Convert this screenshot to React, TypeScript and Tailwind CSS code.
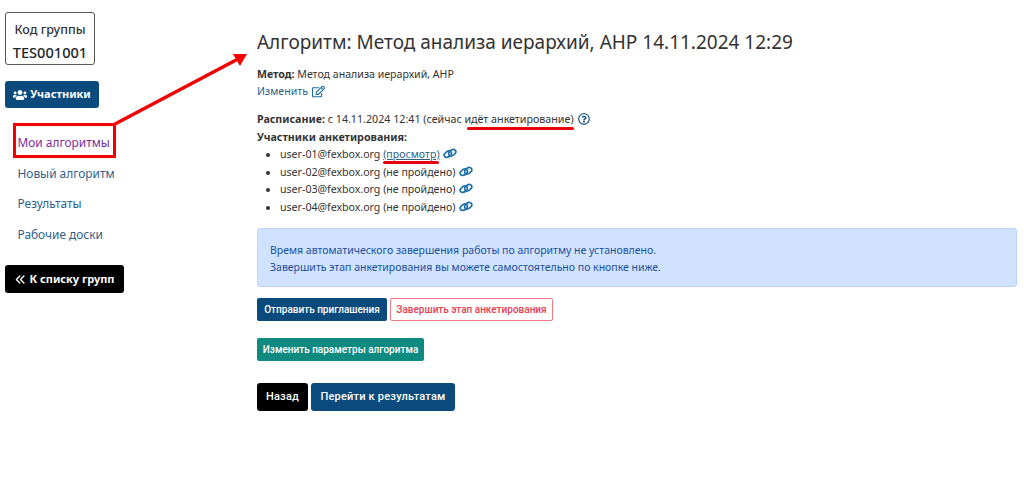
import React from "react";
import { FaUsers, FaRegEdit, FaRegQuestionCircle } from "react-icons/fa";
import { FaAnglesLeft } from "react-icons/fa6";

const sideLinks = ["Новый алгоритм", "Результаты", "Рабочие доски"];
const users = ["user-02@fexbox.org", "user-03@fexbox.org", "user-04@fexbox.org"];

const ChainIcon = () => (
  <svg className="inline-block align-[-1px] ml-[1px]" width="14" height="11" viewBox="0 0 14 11" fill="none" stroke="#1d6fa5" strokeWidth="1.7">
    <ellipse cx="4.8" cy="6.3" rx="3.9" ry="2.7" transform="rotate(-35 4.8 6.3)" />
    <ellipse cx="9.2" cy="4.7" rx="3.9" ry="2.7" transform="rotate(-35 9.2 4.7)" />
  </svg>
);

const App = () => {
  return (
    <div className="relative w-[1024px] h-[488px] overflow-hidden bg-white flex font-['Noto_Sans',sans-serif] text-[#333]">
      <aside className="w-[257px] shrink-0 pl-[5px] pt-3 flex flex-col items-start">
        <div className="w-[90px] h-[53px] border border-[#555] rounded-[3px] flex flex-col items-center pt-[8px]">
          <div className="text-[12.5px] leading-[17px] font-medium">Код группы</div>
          <div className="text-[14.6px] leading-[20px] mt-[4px] font-medium text-[#212529]">TES001001</div>
        </div>
        <button className="mt-[16px] w-[94px] h-[27px] bg-[#0a4a7c] rounded-[3px] text-white text-[11px] font-bold flex items-center justify-center gap-[3px]">
          <FaUsers className="text-[14px]" /> Участники
        </button>
        <nav className="mt-[25px] pl-[12.5px] flex flex-col text-[11.9px] leading-[18px]">
          <a className="text-[#7b2d9e] h-[30.5px]">Мои алгоритмы</a>
          {sideLinks.map((l) => (
            <a key={l} className="text-[#2f5f8a] h-[30.5px]">{l}</a>
          ))}
        </nav>
        <button className="mt-[10px] w-[119px] h-[28px] bg-black rounded-[3px] text-white text-[11px] font-bold flex items-center justify-center gap-1">
          <FaAnglesLeft className="text-[11px]" /> К списку групп
        </button>
      </aside>

      <main className="flex-1 pt-[30px] pr-[7px]">
        <h1 className="text-[19px] leading-[24px] whitespace-nowrap">Алгоритм: Метод анализа иерархий, AHP 14.11.2024 12:29</h1>
        <div className="mt-[13px] text-[10.6px] leading-[14px]"><b>Метод:</b> Метод анализа иерархий, AHP</div>
        <a className="mt-[3px] text-[10.6px] leading-[14px] text-[#2f5f8a] flex items-center gap-1">Изменить <FaRegEdit className="text-[13px] text-[#1d6fa5]" /></a>
        <div className="mt-[14px] text-[10.7px] leading-[14px] flex items-center gap-1">
          <span><b>Расписание:</b> с 14.11.2024 12:41 (сейчас идёт анкетирование)</span>
          <FaRegQuestionCircle className="text-[12px] text-[#0a4a7c]" />
        </div>
        <div className="mt-[4px] text-[10.7px] leading-[14px] font-bold">Участники анкетирования:</div>
        <ul className="mt-[2px] pl-[23px] list-disc text-[10.6px] leading-[17.7px]">
          <li>
            user-01@fexbox.org <a className="text-[#2f5f8a] underline">(просмотр)</a> <ChainIcon />
          </li>
          {users.map((u) => (
            <li key={u}>
              {u} (не пройдено) <ChainIcon />
            </li>
          ))}
        </ul>
        <div className="mt-[11px] h-[59px] bg-[#cfe2ff] border border-[#bcd4f7] rounded-[3px] pl-[12px] pt-[13px] text-[10.5px] leading-[17px] text-[#1b4f9c]">
          <div>Время автоматического завершения работы по алгоритму не установлено.</div>
          <div>Завершить этап анкетирования вы можете самостоятельно по кнопке ниже.</div>
        </div>
        <div className="mt-[11px] flex gap-[3px] font-['Roboto',sans-serif]">
          <button className="w-[130px] h-[23px] bg-[#0a4a7c] rounded-[2px] text-white text-[10px] font-medium">Отправить приглашения</button>
          <button className="w-[163px] h-[23px] border border-[#ef7a85] rounded-[2px] text-[#e8414f] text-[10px] font-medium">Завершить этап анкетирования</button>
        </div>
        <button className="mt-[17px] block w-[167px] h-[23px] bg-[#0f8a80] rounded-[2px] text-white text-[10px] font-medium font-['Roboto',sans-serif]">Изменить параметры алгоритма</button>
        <div className="mt-[22px] flex gap-[3px] font-['Roboto',sans-serif]">
          <button className="w-[51px] h-[28px] bg-black rounded-[3px] text-white text-[11px] font-medium tracking-[0.2px]">Назад</button>
          <button className="w-[144px] h-[28px] bg-[#0a4a7c] rounded-[3px] text-white text-[11px] font-medium tracking-[0.2px]">Перейти к результатам</button>
        </div>
      </main>

      {/* red annotations on top of the screenshot */}
      <div className="absolute left-[13px] top-[123px] w-[103px] h-[35px] border-[3px] border-[#f00000]" />
      <div className="absolute left-[467px] top-[127px] w-[107px] h-[3px] rounded-full bg-[#e8000b]" />
      <div className="absolute left-[383px] top-[161px] w-[56px] h-[3px] rounded-full bg-[#e8000b]" />
      <svg className="absolute left-0 top-0 pointer-events-none" width="1024" height="488" fill="none">
        <line x1="115" y1="124" x2="238" y2="59" stroke="#f00000" strokeWidth="3.5" />
        <polygon points="247,54 233,54 240,66" fill="#f00000" />
      </svg>
    </div>
  );
};

export default App;
